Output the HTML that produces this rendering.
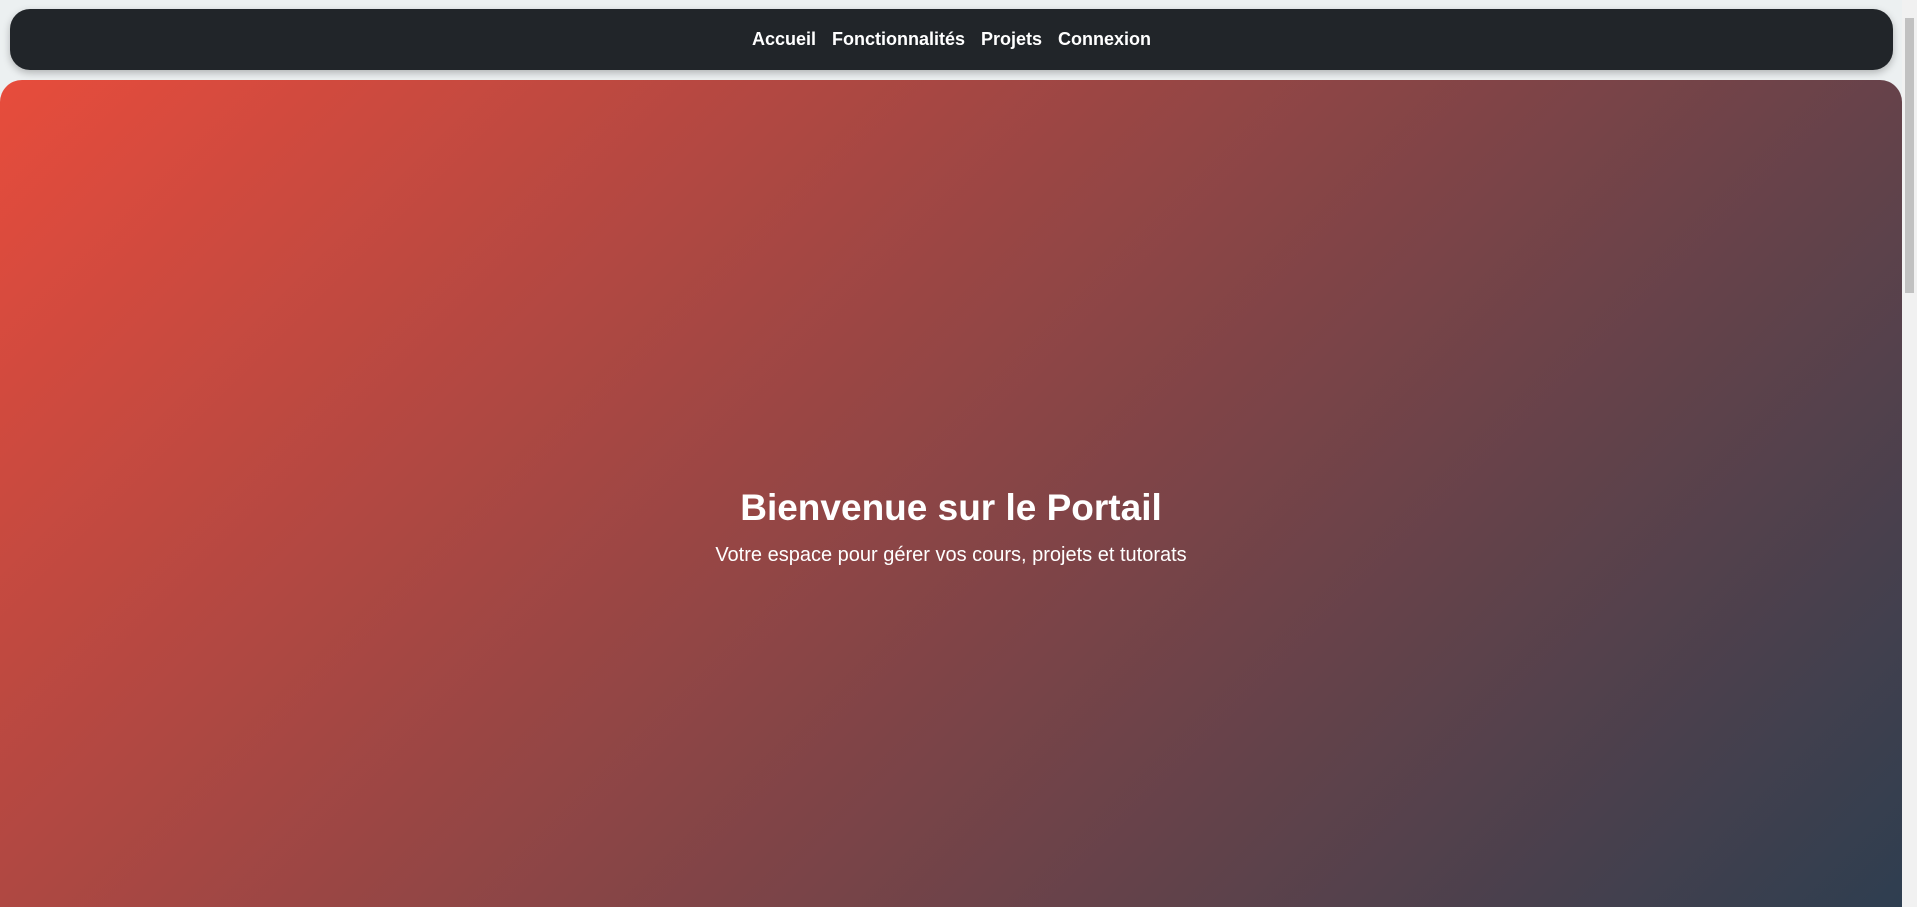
<!DOCTYPE html>
<html><head><meta charset="utf-8"><style>
html,body{margin:0;padding:0;width:1917px;height:907px;overflow:hidden;}
body{background:#ecf0f1;font-family:"Liberation Sans",Arial,sans-serif;position:relative;}
nav{position:absolute;left:10px;top:9px;width:1883px;height:61px;background:#212529;border-radius:20px;box-shadow:0 3px 8px rgba(0,0,0,.25);display:flex;justify-content:center;align-items:center;gap:16px;}
nav a{color:#fff;font-weight:700;font-size:18px;text-decoration:none;}
.hero{position:absolute;left:0;top:80px;width:1902px;height:860px;border-radius:22px;background:linear-gradient(135deg,#e74c3c 0%,#2c3e50 100%);color:#fff;text-align:center;}
h1{position:absolute;left:0;right:0;top:407px;margin:0;font-size:37px;font-weight:700;}
p{position:absolute;left:0;right:0;top:464px;margin:0;font-size:20px;}
.sb{position:absolute;right:0;top:0;width:15px;height:907px;background:#f1f1f1;}
.sb div{position:absolute;left:3px;top:18px;width:9px;height:275px;background:#c1c1c1;}
</style></head><body>
<nav><a>Accueil</a><a>Fonctionnalités</a><a>Projets</a><a>Connexion</a></nav>
<div class="hero"><h1>Bienvenue sur le Portail</h1><p>Votre espace pour gérer vos cours, projets et tutorats</p></div>
<div class="sb"><div></div></div>
</body></html>
